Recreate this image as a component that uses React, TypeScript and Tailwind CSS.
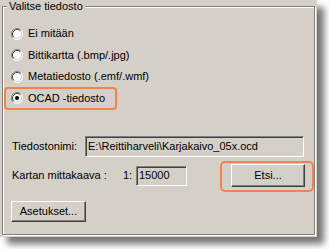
const font = { fontFamily: '"Liberation Sans", Arial, sans-serif' };

const Radio = ({ checked }: { checked?: boolean }) => (
  <svg width="12" height="12" viewBox="0 0 12 12" className="shrink-0">
    <circle cx="6" cy="6" r="5" fill="#fff" />
    <path d="M2.11 9.89 A5.5 5.5 0 0 1 9.89 2.11" stroke="#808080" fill="none" />
    <path d="M9.89 2.11 A5.5 5.5 0 0 1 2.11 9.89" stroke="#ffffff" fill="none" />
    <path d="M2.82 9.18 A4.5 4.5 0 0 1 9.18 2.82" stroke="#404040" fill="none" />
    <path d="M9.18 2.82 A4.5 4.5 0 0 1 2.82 9.18" stroke="#d4d0c8" fill="none" />
    {checked && <circle cx="6" cy="6" r="2" fill="#000" />}
  </svg>
);

const RadioRow = ({ label, checked }: { label: string; checked?: boolean }) => (
  <div className="flex items-center gap-[5px] h-[21.5px]">
    <Radio checked={checked} />
    <span>{label}</span>
  </div>
);

const Field = ({ className, children }: { className: string; children: string }) => (
  <div
    className={`flex items-center px-[2px] bg-[#d4d0c8] border border-t-[#808080] border-l-[#808080] border-b-white border-r-white shadow-[inset_1px_1px_0_#404040] whitespace-nowrap overflow-hidden ${className}`}
  >
    {children}
  </div>
);

const Button = ({ className, children }: { className: string; children: string }) => (
  <div
    className={`flex items-center justify-center bg-[#d4d0c8] border border-t-white border-l-white border-b-[#404040] border-r-[#404040] shadow-[inset_-1px_-1px_0_#808080] ${className}`}
  >
    {children}
  </div>
);

export default function App() {
  return (
    <div className="w-[329px] h-[249px] bg-white overflow-hidden text-[11px] text-black leading-[13px]" style={font}>
      <div className="relative w-[317px] h-[237px] bg-[#d4d0c8] pt-[6px] pl-[2px] shadow-[7px_7px_7px_rgba(0,0,0,0.55)]">
        <div className="relative w-[313px] h-[229px] border border-[#808080] shadow-[inset_1px_1px_0_#fff,1px_1px_0_#fff] pl-[8px] pt-[16px]">
          <span className="absolute left-[4px] top-[-7px] px-[2px] bg-[#d4d0c8]">Valitse tiedosto</span>

          <div className="flex flex-col">
            <RadioRow label="Ei mitään" />
            <RadioRow label="Bittikartta (.bmp/.jpg)" />
            <RadioRow label="Metatiedosto (.emf/.wmf)" />
            <RadioRow label="OCAD -tiedosto" checked />
          </div>

          <div className="flex items-center h-[21px] mt-[27px]">
            <span className="ml-[1px] w-[73px]">Tiedostonimi:</span>
            <Field className="w-[219px] h-[21px]">{"E:\\Reittiharveli\\Karjakaivo_05x.ocd"}</Field>
          </div>

          <div className="flex items-center h-[23px] mt-[7px]">
            <span className="ml-[1px] w-[111px]">Kartan mittakaava :</span>
            <span className="w-[13px]">1:</span>
            <Field className="w-[51px] h-[20px]">15000</Field>
            <Button className="ml-[44px] w-[74px] h-[23px]">Etsi...</Button>
          </div>

          <Button className="mt-[14px] w-[75px] h-[21px]">Asetukset...</Button>

          <div className="absolute left-[1px] top-[80px] w-[113px] h-[23px] border-2 border-[#f4834a] rounded-[4px]" />
          <div className="absolute left-[217px] top-[154px] w-[94px] h-[31px] border-2 border-[#f4834a] rounded-[5px]" />
        </div>
      </div>
    </div>
  );
}
